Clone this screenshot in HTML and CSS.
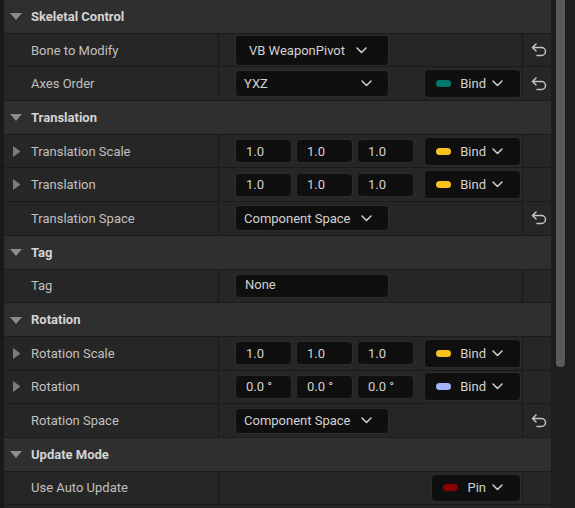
FILE: index.html
```html
<!DOCTYPE html>
<html>
<head>
    <meta charset="utf-8" />
    <title>Details</title>
    <link rel="stylesheet" href="styles.css">
</head>
<body>
<div class="editor">
    <div class="gutter"></div>
    <div class="panel">

        <div class="section-head"><span class="caret-down"></span>Skeletal Control</div>
        <div class="row">
            <div class="name"><span class="twisty"></span>Bone to Modify</div>
            <div class="value">
                <div class="combo combo-bone">VB WeaponPivot
                    <svg class="chev" width="11" height="7" viewBox="0 0 11 7"><polyline points="1,1 5.5,5.5 10,1" /></svg>
                </div>
            </div>
            <div class="reset"><svg class="undo" width="16" height="14" viewBox="0 0 16 14"><path d="M5 1 L1.5 4.5 L5 8 M1.5 4.5 H10.5 A4 4 0 0 1 10.5 12.5 H6" /></svg></div>
        </div>
        <div class="row">
            <div class="name"><span class="twisty"></span>Axes Order</div>
            <div class="value">
                <div class="combo">YXZ
                    <svg class="chev" width="11" height="7" viewBox="0 0 11 7"><polyline points="1,1 5.5,5.5 10,1" /></svg>
                </div>
                <div class="bind"><span class="dot dot-teal"></span>Bind
                    <svg class="chev" width="11" height="7" viewBox="0 0 11 7"><polyline points="1,1 5.5,5.5 10,1" /></svg>
                </div>
            </div>
            <div class="reset"><svg class="undo" width="16" height="14" viewBox="0 0 16 14"><path d="M5 1 L1.5 4.5 L5 8 M1.5 4.5 H10.5 A4 4 0 0 1 10.5 12.5 H6" /></svg></div>
        </div>

        <div class="section-head"><span class="caret-down"></span>Translation</div>
        <div class="row">
            <div class="name"><span class="twisty closed"></span>Translation Scale</div>
            <div class="value">
                <div class="num">1.0</div>
                <div class="num">1.0</div>
                <div class="num">1.0</div>
                <div class="bind"><span class="dot dot-yellow"></span>Bind
                    <svg class="chev" width="11" height="7" viewBox="0 0 11 7"><polyline points="1,1 5.5,5.5 10,1" /></svg>
                </div>
            </div>
            <div class="reset"></div>
        </div>
        <div class="row">
            <div class="name"><span class="twisty closed"></span>Translation</div>
            <div class="value">
                <div class="num">1.0</div>
                <div class="num">1.0</div>
                <div class="num">1.0</div>
                <div class="bind"><span class="dot dot-yellow"></span>Bind
                    <svg class="chev" width="11" height="7" viewBox="0 0 11 7"><polyline points="1,1 5.5,5.5 10,1" /></svg>
                </div>
            </div>
            <div class="reset"></div>
        </div>
        <div class="row">
            <div class="name"><span class="twisty"></span>Translation Space</div>
            <div class="value">
                <div class="combo combo-space">Component Space
                    <svg class="chev" width="11" height="7" viewBox="0 0 11 7"><polyline points="1,1 5.5,5.5 10,1" /></svg>
                </div>
            </div>
            <div class="reset"><svg class="undo" width="16" height="14" viewBox="0 0 16 14"><path d="M5 1 L1.5 4.5 L5 8 M1.5 4.5 H10.5 A4 4 0 0 1 10.5 12.5 H6" /></svg></div>
        </div>

        <div class="section-head"><span class="caret-down"></span>Tag</div>
        <div class="row">
            <div class="name"><span class="twisty"></span>Tag</div>
            <div class="value">
                <div class="text-field">None</div>
            </div>
            <div class="reset"></div>
        </div>

        <div class="section-head"><span class="caret-down"></span>Rotation</div>
        <div class="row">
            <div class="name"><span class="twisty closed"></span>Rotation Scale</div>
            <div class="value">
                <div class="num">1.0</div>
                <div class="num">1.0</div>
                <div class="num">1.0</div>
                <div class="bind"><span class="dot dot-yellow"></span>Bind
                    <svg class="chev" width="11" height="7" viewBox="0 0 11 7"><polyline points="1,1 5.5,5.5 10,1" /></svg>
                </div>
            </div>
            <div class="reset"></div>
        </div>
        <div class="row">
            <div class="name"><span class="twisty closed"></span>Rotation</div>
            <div class="value">
                <div class="num">0.0 °</div>
                <div class="num">0.0 °</div>
                <div class="num">0.0 °</div>
                <div class="bind"><span class="dot dot-blue"></span>Bind
                    <svg class="chev" width="11" height="7" viewBox="0 0 11 7"><polyline points="1,1 5.5,5.5 10,1" /></svg>
                </div>
            </div>
            <div class="reset"></div>
        </div>
        <div class="row">
            <div class="name"><span class="twisty"></span>Rotation Space</div>
            <div class="value">
                <div class="combo combo-space">Component Space
                    <svg class="chev" width="11" height="7" viewBox="0 0 11 7"><polyline points="1,1 5.5,5.5 10,1" /></svg>
                </div>
            </div>
            <div class="reset"><svg class="undo" width="16" height="14" viewBox="0 0 16 14"><path d="M5 1 L1.5 4.5 L5 8 M1.5 4.5 H10.5 A4 4 0 0 1 10.5 12.5 H6" /></svg></div>
        </div>

        <div class="section-head"><span class="caret-down"></span>Update Mode</div>
        <div class="row">
            <div class="name"><span class="twisty"></span>Use Auto Update</div>
            <div class="value">
                <div class="bind bind-pin"><span class="dot dot-red"></span>Pin
                    <svg class="chev" width="11" height="7" viewBox="0 0 11 7"><polyline points="1,1 5.5,5.5 10,1" /></svg>
                </div>
            </div>
            <div class="reset"></div>
        </div>

    </div>
    <div class="scrollbar"><div class="thumb"></div></div>
</div>
</body>
</html>
```

FILE: styles.css
```css
html, body {
    margin: 0;
    padding: 0;
    height: 100%;
}
body {
    background-color: #1c1c1c;
    font-family: Roboto, "Liberation Sans", sans-serif;
    font-size: 13px;
    color: #c0c0c0;
    overflow: hidden;
}
.editor {
    display: flex;
    height: 100%;
}
.gutter {
    width: 4px;
    flex: none;
    background-color: #1a1a1a;
}
.panel {
    width: 547px;
    flex: none;
    background-color: #262626;
}

/* section headers */
.section-head {
    box-sizing: border-box;
    height: 33.7px;
    display: flex;
    align-items: center;
    padding-left: 6px;
    background-color: #2f2f2f;
    border-bottom: 1px solid #1b1b1b;
    font-weight: bold;
    color: #d4d4d4;
}
.caret-down {
    width: 0;
    height: 0;
    border-left: 6px solid transparent;
    border-right: 6px solid transparent;
    border-top: 7px solid #8c8c8c;
    margin-right: 9px;
    margin-top: 1px;
}

/* property rows */
.row {
    box-sizing: border-box;
    height: 33.7px;
    display: grid;
    grid-template-columns: 215px 304px 28px;
    background-color: #262626;
    border-bottom: 1px solid #1b1b1b;
}
.name {
    display: flex;
    align-items: center;
    padding-left: 9px;
    border-right: 1px solid #1b1b1b;
    color: #c0c0c0;
}
.twisty {
    width: 7px;
    height: 11px;
    margin-right: 11px;
    box-sizing: border-box;
}
.twisty.closed {
    width: 0;
    border-top: 5.5px solid transparent;
    border-bottom: 5.5px solid transparent;
    border-left: 7px solid #7c7c7c;
}
.value {
    display: flex;
    align-items: center;
    gap: 4px;
    padding-left: 16px;
    padding-right: 1px;
    border-right: 1px solid #1b1b1b;
}
.reset {
    display: flex;
    align-items: center;
    justify-content: center;
    padding-left: 3px;
}
.undo path {
    fill: none;
    stroke: #c2c2c2;
    stroke-width: 1.5;
    stroke-linecap: round;
    stroke-linejoin: round;
}

/* widgets */
.combo,
.num,
.text-field,
.bind {
    box-sizing: border-box;
    display: flex;
    align-items: center;
    background-color: #0f0f0f;
    border: 1px solid #2c2c2c;
    border-radius: 4px;
    color: #d2d2d2;
}
.combo {
    width: 154px;
    height: 27px;
    padding-left: 8px;
    padding-right: 16px;
    justify-content: space-between;
}
.combo-bone {
    height: 31px;
    padding-left: 13px;
    padding-right: 21px;
}
.combo-space {
    height: 26px;
}
.chev polyline {
    fill: none;
    stroke: #cfcfcf;
    stroke-width: 1.5;
    stroke-linecap: round;
    stroke-linejoin: round;
}
.num {
    width: 57px;
    height: 24px;
    padding-left: 10px;
}
.text-field {
    width: 154px;
    height: 24px;
    padding-left: 9px;
    padding-bottom: 2px;
}
.bind {
    margin-left: auto;
    height: 29px;
    padding-left: 11px;
    padding-right: 17px;
}
.bind .chev {
    margin-left: 6px;
}
.bind-pin {
    height: 28px;
}
.dot {
    width: 15px;
    height: 7px;
    border-radius: 4px;
    margin-right: 9px;
}
.dot-teal { background-color: #00796b; }
.dot-yellow { background-color: #f7c31c; }
.dot-blue { background-color: #a3b4fa; }
.dot-red { background-color: #8c0000; }

/* scrollbar */
.scrollbar {
    flex: 1;
    background-color: #1e1e1e;
    padding-left: 5px;
}
.thumb {
    width: 9px;
    height: 367px;
    background-color: #5a5a5a;
    border-radius: 0 0 4px 4px;
}
```
